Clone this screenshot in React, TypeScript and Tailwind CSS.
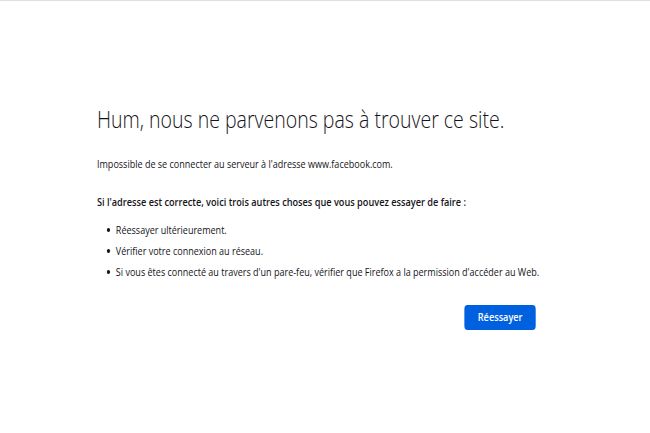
export default function App() {
  const items = [
    "Réessayer ultérieurement.",
    "Vérifier votre connexion au réseau.",
    "Si vous êtes connecté au travers d'un pare-feu, vérifier que Firefox a la permission d'accéder au Web.",
  ];
  return (
    <div className="w-[650px] h-[433px] bg-white border-t border-[#e0e0e0] overflow-hidden" style={{ fontFamily: '"Open Sans", "Noto Sans", sans-serif' }}>
      <div className="pl-[97px] pt-[102px]">
        <div className="w-[535px] origin-top-left scale-x-[0.82] text-[#15141a]">
          <h1 className="text-[23.8px] font-light leading-[32px] m-0 whitespace-nowrap">Hum, nous ne parvenons pas à trouver ce site.</h1>
          <p className="mt-[19px] text-[11px] leading-[20px] whitespace-nowrap">Impossible de se connecter au serveur à l'adresse www.facebook.com.</p>
          <p className="mt-[18px] text-[11.2px] leading-[20px] font-semibold whitespace-nowrap">Si l'adresse est correcte, voici trois autres choses que vous pouvez essayer de faire :</p>
          <ul className="mt-[7px] text-[11px] leading-[21px]">
            {items.map((t) => (
              <li key={t} className="flex items-center whitespace-nowrap">
                <span className="shrink-0 ml-[12px] mr-[7px] w-[4px] h-[4px] rounded-full bg-[#15141a]" />
                <span>{t}</span>
              </li>
            ))}
          </ul>
          <div className="flex justify-end mt-[23px]">
            <button className="h-[25px] px-[16px] rounded-[4px] bg-[#0061e0] text-white text-[11.2px] font-semibold">Réessayer</button>
          </div>
        </div>
      </div>
    </div>
  );
}
